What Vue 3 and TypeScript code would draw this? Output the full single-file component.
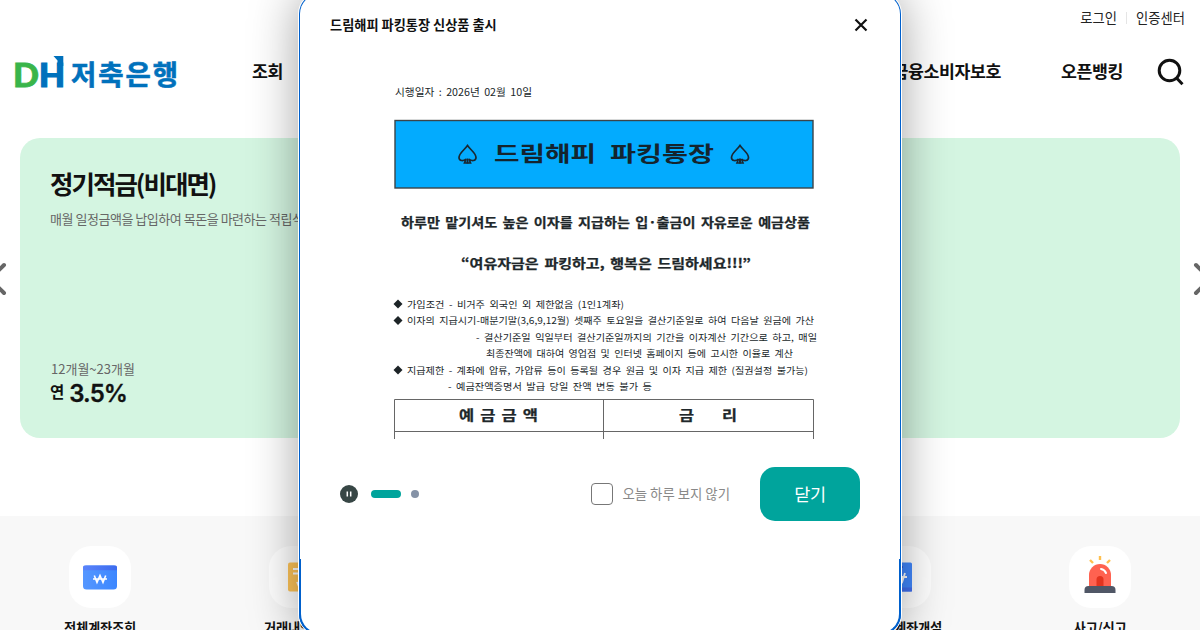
<script setup lang="ts">
interface NoticeLine {
  text: string
  x: number
  y: number
  width: number
  size: number
  bold?: boolean
  bullet?: boolean
}

const menus: string[] = ['금융소비자보호', '오픈뱅킹']

const services: { label: string; icon: string }[] = [
  { label: '전체계좌조회', icon: 'account' },
  { label: '거래내역조회', icon: 'history' },
  { label: '즉시이체', icon: 'none' },
  { label: '이체결과조회', icon: 'none' },
  { label: '비대면계좌개설', icon: 'open' },
  { label: '사고/신고', icon: 'alarm' },
]

const lines: NoticeLine[] = [
  { text: '시행일자 : 2026년 02월 10일', x: 95, y: 36, width: 137, size: 10.5 },
  { text: '하루만 맡기셔도 높은 이자를 지급하는 입·출금이 자유로운 예금상품', x: 101, y: 167, width: 409, size: 13, bold: true },
  { text: '“여유자금은 파킹하고, 행복은 드림하세요!!!”', x: 161, y: 208, width: 290, size: 13, bold: true },
  { text: '가입조건 - 비거주 외국인 외 제한없음 (1인1계좌)', x: 107, y: 247.5, width: 217, size: 9.3, bullet: true },
  { text: '이자의 지급시기-매분기말(3,6,9,12월) 셋째주 토요일을 결산기준일로 하여 다음날 원금에 가산', x: 107, y: 264, width: 407, size: 9.3, bullet: true },
  { text: '- 결산기준일 익일부터 결산기준일까지의 기간을 이자계산 기간으로 하고, 매일', x: 176, y: 280.5, width: 341, size: 9.3 },
  { text: '최종잔액에 대하여 영업점 및 인터넷 홈페이지 등에 고시한 이율로 계산', x: 186, y: 296.5, width: 307, size: 9.3 },
  { text: '지급제한 - 계좌에 압류, 가압류 등이 등록될 경우 원금 및 이자 지급 제한 (질권설정 불가능)', x: 107, y: 313.5, width: 401, size: 9.3, bullet: true },
  { text: '- 예금잔액증명서 발급 당일 잔액 변동 불가 등', x: 148, y: 329.5, width: 204, size: 9.3 },
]
</script>

<template>
  <div class="page">
    <header class="header">
      <div class="util"><span>로그인</span><i></i><span>인증센터</span></div>
      <div class="bar">
        <svg class="logo" width="168" height="48" viewBox="0 -4 168 48">
          <text class="logo-d" x="-2" y="35" textLength="26" lengthAdjust="spacingAndGlyphs">D</text>
          <text class="logo-h" x="24" y="35" textLength="26" lengthAdjust="spacingAndGlyphs">H</text>
          <path d="M38.500 4H48.300V14H42.500V8.500Z" fill="#0071bc" />
          <text class="logo-ko" x="56" y="33" textLength="107" lengthAdjust="spacing">저축은행</text>
        </svg>
        <span class="menu first">조회</span>
        <nav class="menus">
          <span v-for="m in menus" :key="m" class="menu">{{ m }}</span>
        </nav>
        <svg class="search" width="28" height="28" viewBox="0 0 28 28" fill="none" stroke="#111" stroke-width="3">
          <circle cx="12.500" cy="12.500" r="10.300" /><path d="M19.300 19.700L25.500 26.200" />
        </svg>
      </div>
    </header>

    <section class="hero">
      <svg class="arrow" width="20" height="34" viewBox="0 0 20 34"><path d="M17 3L3 17L17 31" /></svg>
      <article class="card">
        <div>
          <h2>정기적금(비대면)</h2>
          <p class="desc">매월 일정금액을 납입하여 목돈을 마련하는 적립식 예금</p>
        </div>
        <div>
          <p class="term">12개월~23개월</p>
          <p class="rate"><span>연</span><b>3.5%</b></p>
        </div>
      </article>
      <svg class="arrow" width="20" height="34" viewBox="0 0 20 34"><path d="M3 3L17 17L3 31" /></svg>
    </section>

    <section class="services">
      <div v-for="s in services" :key="s.label" class="service">
        <div class="tile">
          <svg v-if="s.icon === 'account'" width="34" height="25" viewBox="0 0 34 25">
            <defs>
              <linearGradient id="blueBody"><stop stop-color="#5597ff" /><stop offset="1" stop-color="#3c87ff" /></linearGradient>
              <linearGradient id="blueTop"><stop stop-color="#5a84fb" /><stop offset="1" stop-color="#3c6bee" /></linearGradient>
            </defs>
            <rect y=".5" width="34" height="24" rx="3.500" fill="url(#blueBody)" />
            <path d="M0 5.300V2Q0 .500 1.500 .500H32.500Q34 .500 34 2V5.300Z" fill="url(#blueTop)" />
            <path d="M11.300 10.500L14 17.500L17 10.500L20 17.500L22.700 10.500M10 14H24" fill="none" stroke="#fff" stroke-width="1.600" />
          </svg>
          <svg v-else-if="s.icon === 'history'" class="history" width="26" height="30" viewBox="0 0 26 30">
            <rect y=".5" width="26" height="29" rx="2" fill="#ffc559" />
            <path d="M5 7H20M5 11.500H20" stroke="#fff" stroke-width="1.800" />
            <path d="M9 20L11.500 26L14 20L16.500 26L18 20" fill="none" stroke="#fff" stroke-width="1.800" />
          </svg>
          <svg v-else-if="s.icon === 'open'" width="24" height="30" viewBox="0 0 24 30">
            <rect y=".5" width="24" height="29" rx="1.500" fill="#4289ff" />
            <rect y="25.500" width="24" height="4" fill="#426fef" />
            <path d="M3 5H15" stroke="#315fdc" stroke-width="2" />
            <path d="M7 11L9.500 19L12 11L14.500 19L17 11M5 15H19" fill="none" stroke="#fff" stroke-width="1.800" />
          </svg>
          <svg v-else-if="s.icon === 'alarm'" class="alarm" width="32" height="38" viewBox="0 0 32 38">
            <path d="M16 1V5M6 5L9 8M26 5L23 8" fill="none" stroke="#ffc04f" stroke-width="2.400" />
            <path d="M5 32V20A11 11 0 0 1 27 20V32Z" fill="#ff6250" />
            <path d="M12.500 32V24.500A3.500 3.500 0 0 1 19.500 24.500V32Z" fill="#e3341f" />
            <path d="M17 14Q20.500 14.500 22 18" fill="none" stroke="#fff" stroke-width="2" stroke-linecap="round" />
            <path d="M.500 38V35Q.500 31 4.500 31H27.500Q31.500 31 31.500 35V38Z" fill="#505766" />
          </svg>
        </div>
        <span class="name">{{ s.label }}</span>
      </div>
    </section>

    <div class="popup">
      <div class="popup-head">
        <strong>드림해피 파킹통장 신상품 출시</strong>
        <svg width="14" height="14" viewBox="0 0 14 14"><path d="M1.500 1.500L12.500 12.500M12.500 1.500L1.500 12.500" stroke="#111" stroke-width="2.200" /></svg>
      </div>
      <svg class="notice" width="600" height="379" viewBox="0 0 600 379">
        <defs>
          <g id="spade">
            <path d="M9.500 1C7 5 1 8.500 1 13C1 16.500 5.500 17 8 14.500L6.500 18.500H12.500L11 14.500C13.500 17 18 16.500 18 13C18 8.500 12 5 9.500 1Z" fill="none" stroke="#1a2832" stroke-width="1.700" />
            <path d="M9.500 14V19" stroke="#1a2832" stroke-width="2" />
          </g>
        </defs>
        <rect x="95" y="60.500" width="418" height="67.500" fill="#03abfe" stroke="#3c4448" stroke-width="1.400" />
        <use href="#spade" x="158" y="84.500" />
        <use href="#spade" x="430.500" y="84.500" />
        <text class="headline" x="194" y="101" textLength="102" lengthAdjust="spacingAndGlyphs">드림해피</text>
        <text class="headline" x="310" y="101" textLength="104" lengthAdjust="spacingAndGlyphs">파킹통장</text>
        <template v-for="l in lines" :key="l.text">
          <path v-if="l.bullet" :transform="`translate(98 ${l.y - 3.5})`" d="M-4.500 0L0 -4.500L4.500 0L0 4.500Z" fill="#1d2427" />
          <text
            :class="['line', { bold: l.bold }]" :x="l.x" :y="l.y" :font-size="l.size"
            :textLength="l.width" lengthAdjust="spacingAndGlyphs"
          >{{ l.text }}</text>
        </template>
        <path d="M94.500 379V339.500H513.500V379M94 371.500H514M303.500 340V379" fill="none" stroke="#666" stroke-width="1" />
        <text class="line bold" x="159" y="360" font-size="13.500" textLength="79" lengthAdjust="spacingAndGlyphs">예 금 금 액</text>
        <text class="line bold" x="379" y="360" font-size="13.500" textLength="15" lengthAdjust="spacingAndGlyphs">금</text>
        <text class="line bold" x="422" y="360" font-size="13.500" textLength="15" lengthAdjust="spacingAndGlyphs">리</text>
      </svg>
      <div class="popup-foot">
        <svg width="18" height="18" viewBox="0 0 18 18"><circle cx="9" cy="9" r="9" fill="#374645" /><path d="M7.300 6.500V11.500M10.700 6.500V11.500" stroke="#fff" stroke-width="1.500" /></svg>
        <i class="on"></i><i class="dot"></i>
        <label><span class="check"></span><span class="today">오늘 하루 보지 않기</span></label>
        <button type="button">닫기</button>
      </div>
    </div>
  </div>
</template>

<style>
body { margin: 0; overflow: hidden; }
</style>

<style scoped>
.page { position: relative; width: 1200px; height: 630px; overflow: hidden; background: #fff; color: #111; font-family: "Noto Sans CJK KR", "Noto Sans", sans-serif; }
h2, p { margin: 0; }
.header { height: 138px; box-sizing: border-box; padding: 8px 15px 0; }
.util { display: flex; justify-content: flex-end; align-items: center; height: 20px; font-size: 13.3px; line-height: 20px; color: #222; }
.util i { width: 1px; height: 12px; margin: 0 9px; background: #e5e5e5; }
.bar { display: flex; align-items: center; height: 88px; }
.logo { flex: none; overflow: visible; }
.logo-d, .logo-h { font: 900 33px Lato, sans-serif; fill: #39b54a; stroke: #39b54a; stroke-width: 0.8px; }
.logo-h { fill: #0071bc; stroke: #0071bc; stroke-width: 1.2px; }
.logo-ko { font-size: 27.5px; font-weight: 700; fill: #0071bc; stroke: #0071bc; stroke-width: 0.6px; }
.menu { margin-top: -2px; font-size: 17.3px; line-height: 26px; font-weight: 700; letter-spacing: -0.4px; white-space: nowrap; }
.first { margin-left: 69px; }
.menus { display: flex; gap: 60px; margin-left: auto; }
.search { margin: 0 0 0 34px; }
.hero { display: flex; align-items: center; justify-content: space-between; height: 300px; margin: 0 -13px; }
.arrow { flex: none; margin-top: -19px; }
.arrow path { fill: none; stroke: #666; stroke-width: 4; stroke-linecap: round; }
.card { display: flex; flex-direction: column; justify-content: space-between; width: 1160px; height: 300px; box-sizing: border-box; padding: 26px 30px 29px; border-radius: 20px; background: #d4f5e1; }
.card h2 { font-size: 25.5px; line-height: 38px; letter-spacing: -2px; font-weight: 700; }
.desc { margin-top: 7px; font-size: 13px; line-height: 20px; letter-spacing: -0.47px; color: #666; }
.term { padding-left: 1px; font-size: 13px; line-height: 20px; color: #666; }
.rate { display: flex; align-items: center; gap: 5px; height: 30px; }
.rate span { font-size: 15.5px; line-height: 24px; font-weight: 700; margin-top: -6px; }
.rate b { font: 600 24px/30px Inter, sans-serif; letter-spacing: -0.9px; -webkit-text-stroke: 0.3px #111; }
.services { display: grid; grid-template-columns: repeat(6, 200px); height: 114px; margin-top: 78px; padding-top: 30px; box-sizing: border-box; background: #f8f8f8; }
.service { display: flex; flex-direction: column; align-items: center; }
.tile { display: flex; align-items: center; justify-content: center; flex: none; width: 62px; height: 62px; border-radius: 22px; background: #fff; }
.history { margin-left: 2px; }
.alarm { margin-top: -7px; }
.name { margin-top: 9px; font-size: 13.3px; line-height: 22px; font-weight: 700; letter-spacing: -0.25px; white-space: nowrap; }
.popup { position: absolute; left: 300px; top: -6px; width: 600px; height: 640px; border-radius: 20px; background: #fff; box-shadow: 0 0 0 1px #0060cc, 0 0 0 2px #fff, 0 0 50px rgba(0, 0, 0, 0.4); }
.popup::after { content: ""; position: absolute; left: -1px; right: -1px; bottom: -1px; height: 76px; box-sizing: border-box; border: 2px solid #0060cc; border-top: 0; border-radius: 0 0 21px 21px; }
.popup-head { display: flex; justify-content: space-between; align-items: center; height: 66px; box-sizing: border-box; padding: 0 32px 4px 30px; }
.popup-head strong { font-size: 13.2px; line-height: 20px; }
.notice { display: block; }
.line { font-family: "Noto Sans CJK KR", sans-serif; fill: #20272a; word-spacing: 2px; white-space: pre; }
.bold { font-weight: 700; stroke: #20272a; stroke-width: 0.25px; }
.headline { font-size: 21px; font-weight: 700; fill: #14242e; }
.popup-foot { display: flex; align-items: center; height: 54px; margin-top: 28px; padding: 0 40px; }
.on { width: 30px; height: 8px; margin-left: 13px; border-radius: 4px; background: #00a49c; }
.dot { width: 8px; height: 8px; margin-left: 10px; border-radius: 4px; background: #8592a6; }
.popup-foot label { display: flex; align-items: center; gap: 9px; margin-left: auto; font-size: 13.4px; color: #888; }
.today { margin-top: -2px; }
.check { width: 20px; height: 20px; border: 1px solid #777; border-radius: 4px; }
.popup-foot button { width: 100px; height: 54px; margin-left: 30px; padding: 0 0 2px; border: 0; border-radius: 15px; background: #00a49c; color: #fff; font: 400 17.5px "Noto Sans CJK KR", sans-serif; letter-spacing: -0.3px; }
</style>
